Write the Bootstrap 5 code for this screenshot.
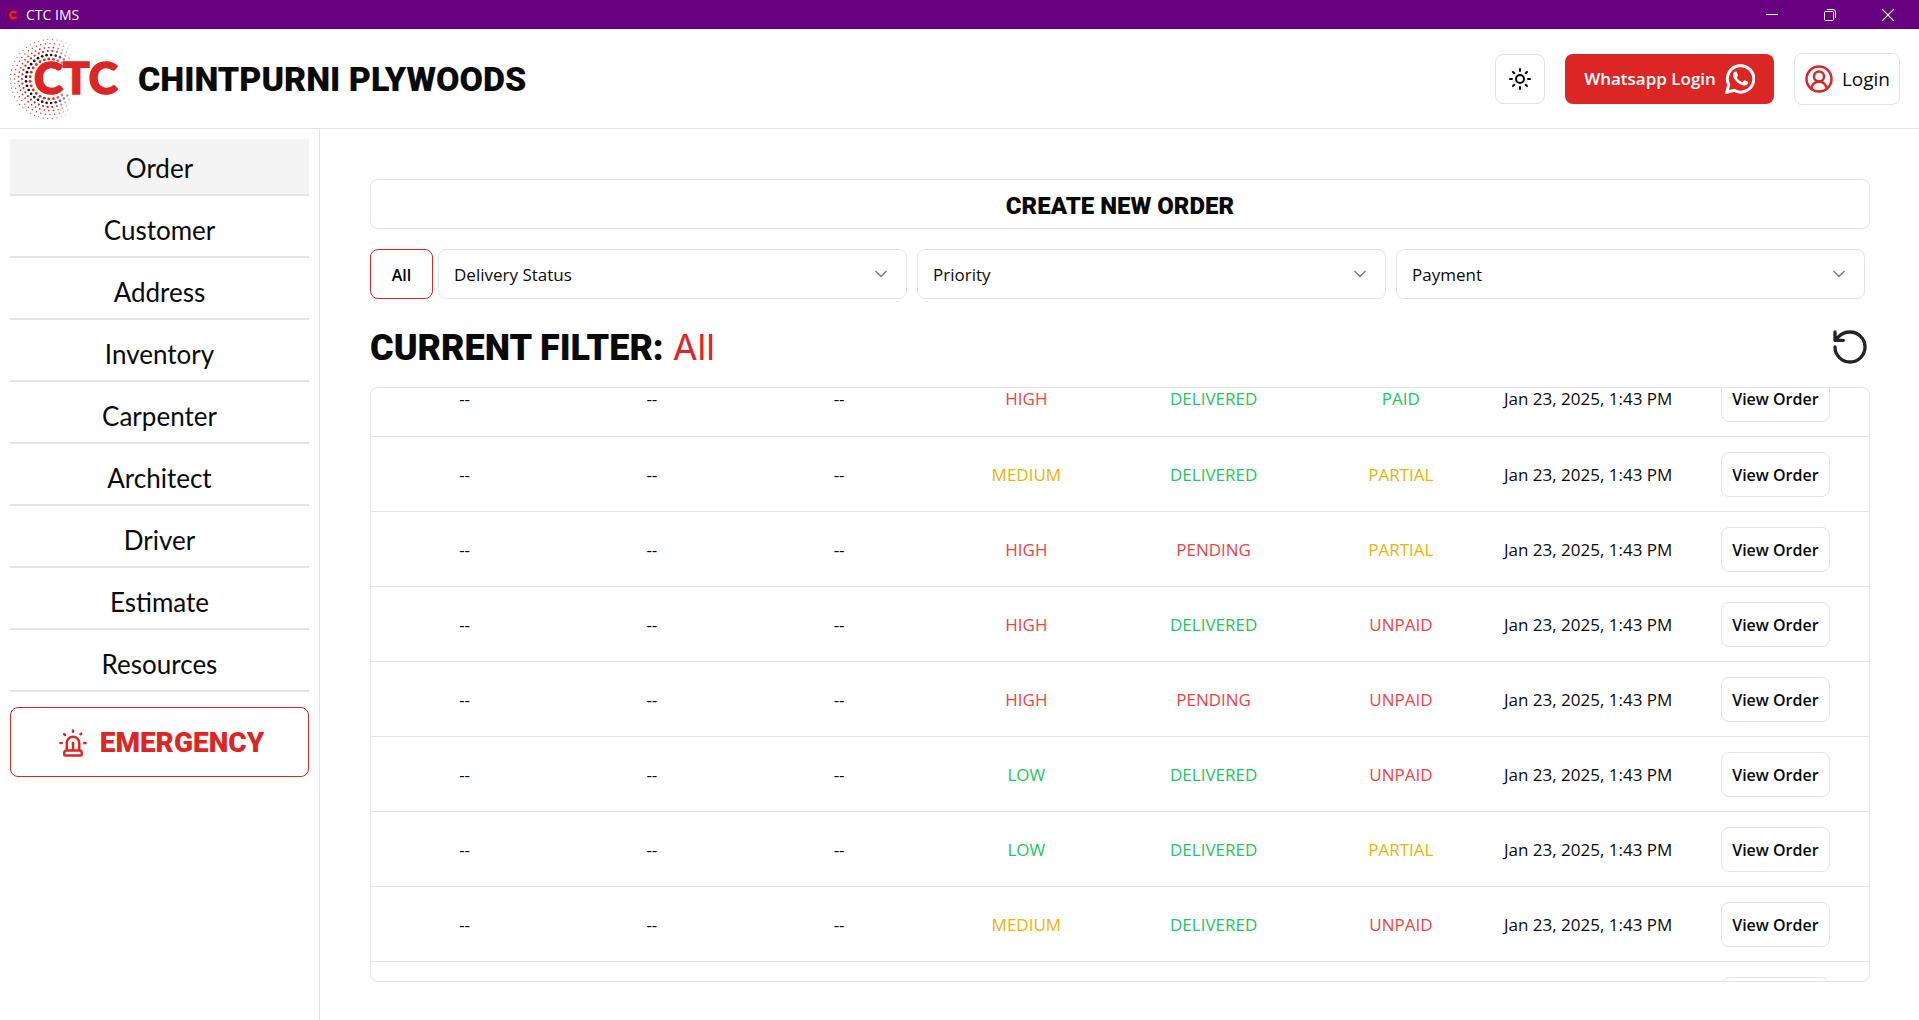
<!DOCTYPE html>
<html lang="en">
<head>
<meta charset="utf-8">
<meta name="viewport" content="width=device-width, initial-scale=1">
<title>CTC IMS</title>
<link href="https://cdn.jsdelivr.net/npm/bootstrap@5.3.0/dist/css/bootstrap.min.css" rel="stylesheet">
<style>
  :root { --line: #e4e4e4; --ink: #0a0a0a; --brand: #dc2626; }
  body { font-family: "Open Sans", sans-serif; font-size: 17px; line-height: 24px; color: var(--ink); }
  svg { display: block; flex: none; }
  .line-icon { fill: none; stroke: currentColor; stroke-width: 2; stroke-linecap: round; stroke-linejoin: round; }
  .display-face { font-family: Roboto, sans-serif; font-weight: 900; }

  .titlebar { height: 29px; background: #69007f; font-size: 14px; line-height: 20px; padding-right: 2px; }
  .win-btn { width: 58px; height: 29px; }

  .topbar { height: 100px; border-bottom: 1px solid var(--line); padding-right: 19px; }
  .brand-name { font-size: 34px; line-height: 40px; }
  .outline-box { border: 1px solid var(--line); border-radius: 8px; background: #fff; color: var(--ink); }
  .outline-box:hover { background: #f4f4f4; }
  .theme-btn { width: 50px; height: 50px; }
  .wa-btn { height: 50px; border-radius: 8px; background: var(--brand); color: #fff; font-weight: 600; padding: 0 19px; gap: 9px; }
  .login-btn { height: 52px; font-size: 19px; padding: 0 9px; }
  .brand-red { color: var(--brand); }

  .sidebar { width: 320px; border-right: 1px solid var(--line); padding: 10px; gap: 5px; }
  .side-link { height: 57px; border-bottom: 2px solid var(--line); font-family: Lato, sans-serif; font-size: 26px; color: var(--ink); padding-top: 2px; }
  .side-link.active, .side-link:hover { background: #f4f4f4; }
  .emergency { height: 70px; margin-top: 10px; border: 1px solid var(--brand); border-radius: 8px; background: #fff; color: var(--brand); font-size: 28px; gap: 12px; padding: 2px 0 0 3px; }

  .content { padding: 50px 49px 38px 50px; }
  .create-btn { height: 50px; font-size: 24px; padding: 4px 0 0; }
  .filters { margin: 20px 5px 0 0; gap: 10px; }
  .all-btn { width: 63px; height: 50px; border: 1px solid var(--brand); border-radius: 8px; background: #fff; font-size: 16px; font-weight: 600; margin-right: -5px; padding-top: 3px; }
  .filter-select { height: 50px; border-color: var(--line); border-radius: 8px; color: var(--ink); font-size: 17px; padding: 8px 40px 6px 15px; cursor: pointer;
    background-image: url("data:image/svg+xml,%3Csvg xmlns='http://www.w3.org/2000/svg' viewBox='0 0 24 24' fill='none' stroke='%237f7f7f' stroke-width='2' stroke-linecap='round' stroke-linejoin='round'%3E%3Cpath d='m6 9 6 6 6-6'/%3E%3C/svg%3E");
    background-size: 20px 20px; background-position: right 15px center; }
  .filter-head { height: 80px; margin-top: 8px; }
  .filter-title { font-size: 36px; line-height: 40px; }
  .filter-value { font-family: Inter, sans-serif; font-weight: 400; color: var(--brand); }

  .order-pane { border: 1px solid var(--line); border-radius: 8px; overflow-y: auto; scrollbar-width: none; min-height: 0; }
  .order-pane::-webkit-scrollbar { display: none; }
  .order-table { table-layout: fixed; margin: 0; }
  .order-table td { height: 75px; padding: 2px 0 0; border-bottom: 1px solid var(--line); text-align: center; vertical-align: middle; color: var(--ink); white-space: nowrap; }
  .view-btn { height: 45px; padding: 0 10px; font-size: 16px; font-weight: 600; }
  .order-table td.tone-red { color: #ef4444; }
  .order-table td.tone-green { color: #22c55e; }
  .order-table td.tone-amber { color: #eab308; }
</style>
<script src="https://cdn.jsdelivr.net/npm/bootstrap@5.3.0/dist/js/bootstrap.bundle.min.js"></script>
</head>
<body class="vh-100 d-flex flex-column overflow-hidden bg-white">

<div class="titlebar d-flex align-items-center text-white flex-shrink-0">
  <svg class="ms-1" width="18" height="18" viewBox="0 0 18 18" aria-hidden="true">
    <circle cx="8" cy="9" r="7" fill="#b01030" opacity=".3"/>
    <path d="M6 4a6 6 0 0 0 0 10" fill="none" stroke="#20001c" stroke-width="1.4" stroke-dasharray="1 1"/>
    <path d="M12.3 7.3a3.2 3.2 0 1 0 0 3.6" fill="none" stroke="#e32626" stroke-width="2.4"/>
  </svg>
  <span class="ms-1">CTC IMS</span>
  <div class="d-flex ms-auto">
    <button class="win-btn btn p-0 border-0 rounded-0 text-white d-flex align-items-center justify-content-center" type="button" aria-label="Minimize">
      <svg width="12" height="12" viewBox="0 0 12 12"><path d="M0 5.5h12" stroke="currentColor"/></svg>
    </button>
    <button class="win-btn btn p-0 border-0 rounded-0 text-white d-flex align-items-center justify-content-center" type="button" aria-label="Restore">
      <svg width="12" height="12" viewBox="0 0 12 12" fill="none" stroke="currentColor"><rect x=".5" y="2.5" width="9" height="9" rx="1"/><path d="M3 .5h6a2.5 2.5 0 0 1 2.500 2.500v6"/></svg>
    </button>
    <button class="win-btn btn p-0 border-0 rounded-0 text-white d-flex align-items-center justify-content-center" type="button" aria-label="Close">
      <svg width="12" height="12" viewBox="0 0 12 12"><path d="m0 0 12 12M12 0 0 12" stroke="currentColor" stroke-width="1.2"/></svg>
    </button>
  </div>
</div>

<header class="topbar d-flex align-items-center flex-shrink-0">
  <svg class="ms-2" width="114" height="84" viewBox="8 37 114 84" role="img" aria-label="CTC">
    <g id="dots"></g>
    <text x="34" y="94" font-family="Lato, sans-serif" font-weight="900" font-size="44" fill="#dc2626" stroke="#dc2626" stroke-width="1.6">CTC</text>
  </svg>
  <h1 class="brand-name display-face mb-0 ms-3">CHINTPURNI PLYWOODS</h1>
  <div class="d-flex align-items-center ms-auto gap-3">
    <button class="theme-btn outline-box p-0 me-1 d-flex align-items-center justify-content-center" type="button" aria-label="Toggle theme">
      <svg class="line-icon" width="24" height="24" viewBox="0 0 24 24"><circle cx="12" cy="12" r="4"/><path d="M12 2v2M12 20v2M4.900 4.900l1.400 1.400M17.700 17.700l1.400 1.400M2 12h2M20 12h2M6.300 17.700l-1.400 1.400M19.100 4.900l-1.400 1.400"/></svg>
    </button>
    <button class="wa-btn border-0 me-1 d-flex align-items-center" type="button">Whatsapp Login
      <svg width="30" height="30" viewBox="0 0 30 30"><path d="M1.800 28.300 3.700 20.600A13.200 13.200 0 1 1 9 26.300z" fill="none" stroke="#fff" stroke-width="3"/><path transform="translate(.6 -.4) scale(1.875)" fill="#fff" d="M11.609 9.587c-.197-.099-1.170-.578-1.353-.646-.182-.065-.315-.099-.445.099-.133.197-.513.646-.627.775-.114.133-.232.148-.430.050-.197-.100-.836-.308-1.592-.985-.590-.525-.985-1.175-1.103-1.372-.114-.198-.011-.304.088-.403.087-.088.197-.232.296-.346.100-.114.133-.198.198-.330.065-.134.034-.248-.015-.347-.050-.099-.445-1.076-.612-1.470-.160-.389-.323-.335-.445-.340-.114-.007-.247-.007-.380-.007a.730.730 0 0 0-.529.247c-.182.198-.691.677-.691 1.654s.710 1.916.810 2.049c.098.133 1.394 2.132 3.383 2.992.470.205.840.326 1.129.418.475.152.904.129 1.246.080.380-.058 1.171-.480 1.338-.943.164-.464.164-.860.114-.943-.049-.084-.182-.133-.380-.232"/></svg>
    </button>
    <button class="login-btn outline-box d-flex align-items-center gap-2" type="button">
      <svg class="line-icon brand-red" width="30" height="30" viewBox="0 0 24 24"><circle cx="12" cy="12" r="10"/><circle cx="12" cy="10" r="4"/><path d="M18 20a6 6 0 0 0-12 0"/></svg>Login
    </button>
  </div>
</header>

<div class="d-flex flex-grow-1 overflow-hidden">
  <nav class="sidebar d-flex flex-column flex-shrink-0" aria-label="Sections">
    <a class="side-link active d-flex align-items-center justify-content-center text-decoration-none" href="#" aria-current="page">Order</a>
    <a class="side-link d-flex align-items-center justify-content-center text-decoration-none" href="#">Customer</a>
    <a class="side-link d-flex align-items-center justify-content-center text-decoration-none" href="#">Address</a>
    <a class="side-link d-flex align-items-center justify-content-center text-decoration-none" href="#">Inventory</a>
    <a class="side-link d-flex align-items-center justify-content-center text-decoration-none" href="#">Carpenter</a>
    <a class="side-link d-flex align-items-center justify-content-center text-decoration-none" href="#">Architect</a>
    <a class="side-link d-flex align-items-center justify-content-center text-decoration-none" href="#">Driver</a>
    <a class="side-link d-flex align-items-center justify-content-center text-decoration-none" href="#">Estimate</a>
    <a class="side-link d-flex align-items-center justify-content-center text-decoration-none" href="#">Resources</a>
    <button class="emergency display-face d-flex align-items-center justify-content-center" type="button">
      <svg class="line-icon" width="30" height="30" viewBox="0 0 24 24"><path d="M7 18v-6a5 5 0 1 1 10 0v6M5 21a1 1 0 0 0 1 1h12a1 1 0 0 0 1-1v-1a2 2 0 0 0-2-2H7a2 2 0 0 0-2 2zM21 12h1M18.500 4.500 18 5M2 12h1M12 2v1M4.929 4.929l.707.707M12 12v6"/></svg>EMERGENCY
    </button>
  </nav>

  <main class="content d-flex flex-column flex-grow-1">
    <button class="create-btn outline-box display-face w-100 flex-shrink-0" type="button">CREATE NEW ORDER</button>
    <div class="filters d-flex">
      <button class="all-btn flex-shrink-0" type="button">All</button>
      <select class="filter-select form-select" aria-label="Delivery Status"><option>Delivery Status</option></select>
      <select class="filter-select form-select" aria-label="Priority"><option>Priority</option></select>
      <select class="filter-select form-select" aria-label="Payment"><option>Payment</option></select>
    </div>
    <div class="filter-head d-flex align-items-center justify-content-between flex-shrink-0">
      <h2 class="filter-title display-face mb-0">CURRENT FILTER: <span class="filter-value">All</span></h2>
      <button class="btn p-0 border-0" type="button" aria-label="Reload orders">
        <svg class="line-icon" width="40" height="40" viewBox="0 0 24 24"><path d="M3 12a9 9 0 1 0 9-9 9.750 9.750 0 0 0-6.740 2.740L3 8M3 3v5h5"/></svg>
      </button>
    </div>
    <div class="order-pane flex-grow-1" id="pane">
      <table class="order-table w-100"><tbody id="rows"></tbody></table>
    </div>
  </main>
</div>

<script>
  const tones = { HIGH: 'red', MEDIUM: 'amber', LOW: 'green', DELIVERED: 'green', PENDING: 'red', PAID: 'green', PARTIAL: 'amber', UNPAID: 'red' };
  const orders = [
    ['HIGH', 'DELIVERED', 'PAID'], ['MEDIUM', 'DELIVERED', 'PARTIAL'], ['HIGH', 'PENDING', 'PARTIAL'],
    ['HIGH', 'DELIVERED', 'UNPAID'], ['HIGH', 'PENDING', 'UNPAID'], ['LOW', 'DELIVERED', 'UNPAID'],
    ['LOW', 'DELIVERED', 'PARTIAL'], ['MEDIUM', 'DELIVERED', 'UNPAID'], ['LOW', 'PENDING', 'PAID']
  ];
  document.getElementById('rows').innerHTML = orders.map(o =>
    '<tr>' + '<td>--</td>'.repeat(3) + o.map(v => `<td class="tone-${tones[v]}">${v}</td>`).join('') +
    '<td>Jan 23, 2025, 1:43 PM</td><td><button class="view-btn outline-box" type="button">View Order</button></td></tr>').join('');
  document.getElementById('pane').scrollTop = 27;

  // Halo of dots round the first letter: six rings that fade out to the right.
  const rings = [[39.5, .55, 'r'], [35.5, .7, 'r'], [31.5, .85, 'r'], [28, 1.1, 'r'], [24, 1.35, 'k'], [20, 1.4, 'r']];
  let dots = '';
  rings.forEach(([r, s, c]) => {
    const n = Math.round(2 * Math.PI * r / 4.6);
    for (let i = 0; i < n; i++) {
      const a = i / n * 2 * Math.PI, x = 50 + r * Math.cos(a), y = 79 + r * Math.sin(a);
      if (x > 71 || (x > 60 && Math.abs(y - 79) < 16)) continue;
      const o = Math.min(1, (76 - x) / 24);
      dots += `<circle cx="${x.toFixed(1)}" cy="${y.toFixed(1)}" r="${s}" opacity="${o.toFixed(2)}" fill="${c === 'k' ? '#111' : '#dc2626'}"/>`;
    }
  });
  document.getElementById('dots').innerHTML = dots;
</script>
</body>
</html>
